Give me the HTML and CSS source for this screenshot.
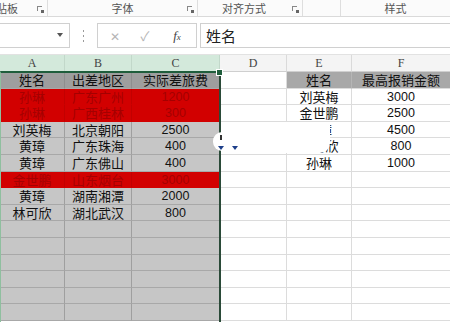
FILE: index.html
```html
<!DOCTYPE html>
<html>
<head>
<meta charset="utf-8">
<link rel="stylesheet" href="styles.css">
</head>
<body>
<div class="app">
  <div class="ribbon">
    <div class="grp g1"><span class="glabel cut">贴板</span><span class="launch"></span></div>
    <div class="grp g2"><span class="glabel">字体</span><span class="launch"></span></div>
    <div class="grp g3"><span class="glabel">对齐方式</span><span class="launch"></span></div>
    <div class="grp g4"></div>
    <div class="grp g5"><span class="glabel">样式</span></div>
  </div>
  <div class="fbar">
    <div class="namebox"><span class="arrow"></span></div>
    <div class="dots"><i></i><i></i><i></i></div>
    <div class="fxbox">
      <span class="ic x">✕</span>
      <span class="ic ok">✓</span>
      <span class="ic fx">f<sub>x</sub></span>
    </div>
    <div class="finput">姓名</div>
  </div>
  <div class="sheet">
    <div class="row hdr">
      <div class="c ca sel">A</div><div class="c cb sel">B</div><div class="c cc sel">C</div>
      <div class="c cd">D</div><div class="c ce">E</div><div class="c cf">F</div>
    </div>
    <div class="row">
      <div class="c ca s th">姓名</div><div class="c cb s th">出差地区</div><div class="c cc s th">实际差旅费</div>
      <div class="c cd"></div><div class="c ce th2">姓名</div><div class="c cf th2">最高报销金额</div>
    </div>
    <div class="row">
      <div class="c ca r">孙琳</div><div class="c cb r">广东广州</div><div class="c cc r n">1200</div>
      <div class="c cd"></div><div class="c ce">刘英梅</div><div class="c cf n">3000</div>
    </div>
    <div class="row">
      <div class="c ca r">孙琳</div><div class="c cb r">广西桂林</div><div class="c cc r n">300</div>
      <div class="c cd"></div><div class="c ce">金世鹏</div><div class="c cf n">2500</div>
    </div>
    <div class="row">
      <div class="c ca s">刘英梅</div><div class="c cb s">北京朝阳</div><div class="c cc s n">2500</div>
      <div class="c cd"></div><div class="c ce">黄璋</div><div class="c cf n">4500</div>
    </div>
    <div class="row">
      <div class="c ca s">黄璋</div><div class="c cb s">广东珠海</div><div class="c cc s n">400</div>
      <div class="c cd"></div><div class="c ce">林可欣</div><div class="c cf n">800</div>
    </div>
    <div class="row">
      <div class="c ca s">黄璋</div><div class="c cb s">广东佛山</div><div class="c cc s n">400</div>
      <div class="c cd"></div><div class="c ce">孙琳</div><div class="c cf n">1000</div>
    </div>
    <div class="row">
      <div class="c ca r">金世鹏</div><div class="c cb r">山东烟台</div><div class="c cc r n">3000</div>
      <div class="c cd"></div><div class="c ce"></div><div class="c cf"></div>
    </div>
    <div class="row">
      <div class="c ca s">黄璋</div><div class="c cb s">湖南湘潭</div><div class="c cc s n">2000</div>
      <div class="c cd"></div><div class="c ce"></div><div class="c cf"></div>
    </div>
    <div class="row">
      <div class="c ca s">林可欣</div><div class="c cb s">湖北武汉</div><div class="c cc s n">800</div>
      <div class="c cd"></div><div class="c ce"></div><div class="c cf"></div>
    </div>
    <div class="row"><div class="c ca s"></div><div class="c cb s"></div><div class="c cc s"></div><div class="c cd"></div><div class="c ce"></div><div class="c cf"></div></div>
    <div class="row"><div class="c ca s"></div><div class="c cb s"></div><div class="c cc s"></div><div class="c cd"></div><div class="c ce"></div><div class="c cf"></div></div>
    <div class="row"><div class="c ca s"></div><div class="c cb s"></div><div class="c cc s"></div><div class="c cd"></div><div class="c ce"></div><div class="c cf"></div></div>
    <div class="row"><div class="c ca s"></div><div class="c cb s"></div><div class="c cc s"></div><div class="c cd"></div><div class="c ce"></div><div class="c cf"></div></div>
    <div class="row"><div class="c ca s"></div><div class="c cb s"></div><div class="c cc s"></div><div class="c cd"></div><div class="c ce"></div><div class="c cf"></div></div>
    <div class="row"><div class="c ca s"></div><div class="c cb s"></div><div class="c cc s"></div><div class="c cd"></div><div class="c ce"></div><div class="c cf"></div></div>
    <div class="selbox"><span class="handle"></span></div>
    <div class="smear"></div>
    <div class="tag"><span class="mk"></span><span class="tri"></span><span class="tri t2"></span></div>
  </div>
</div>
</body>
</html>
```
FILE: styles.css
```css
html, body {
  margin: 0;
  padding: 0;
  background: #ffffff;
}
.app {
  width: 450px;
  height: 322px;
  overflow: hidden;
  font-family: "Noto Sans CJK SC", "Liberation Sans", sans-serif;
}
.ribbon {
  height: 16px;
  display: flex;
  border-bottom: 1px solid #dadada;
  background: #fbfbfb;
}
.grp {
  position: relative;
  border-right: 1px solid #dedede;
  display: flex;
  align-items: center;
  justify-content: center;
  font-size: 11px;
  color: #555;
}
.g1 { width: 47px; justify-content: flex-start; }
.g2 { width: 149px; }
.g3 { width: 104px; }
.g4 { width: 37px; }
.g5 { flex: 1; border-right: none; }
.glabel { line-height: 16px; }
.g3 .glabel { margin-right: 12px; }
.cut { margin-left: -4px; }
.launch {
  position: absolute;
  right: 5px;
  top: 6px;
  width: 5px;
  height: 5px;
  border-left: 1px solid #888;
  border-top: 1px solid #888;
  box-sizing: border-box;
}
.launch::after {
  content: "";
  position: absolute;
  right: -2px;
  bottom: -2px;
  width: 3px;
  height: 3px;
  background: #666;
}
.fbar {
  height: 38px;
  display: flex;
  align-items: center;
  box-sizing: border-box;
  border-bottom: 1px solid #e2e2e2;
  background: #ffffff;
}
.namebox {
  position: relative;
  width: 70px;
  height: 25px;
  box-sizing: border-box;
  border: 1px solid #d0d0d0;
  border-left: none;
  background: #fff;
}
.arrow {
  position: absolute;
  right: 6px;
  top: 9px;
  border-left: 3px solid transparent;
  border-right: 3px solid transparent;
  border-top: 4px solid #555;
}
.dots {
  width: 27px;
  display: flex;
  flex-direction: column;
  align-items: center;
  gap: 3px;
}
.dots i {
  width: 1px;
  height: 2px;
  background: #9a9a9a;
}
.fxbox {
  width: 100px;
  height: 25px;
  box-sizing: border-box;
  border: 1px solid #d0d0d0;
  display: flex;
  align-items: center;
  background: #fff;
}
.ic { display: block; text-align: center; }
.x { width: 34px; color: #b5b5b5; font-size: 12px; }
.ok { width: 26px; color: #b5b5b5; font-size: 13px; }
.fx {
  width: 38px;
  font-family: "Liberation Serif", serif;
  font-style: italic;
  font-size: 13px;
  color: #444;
}
.fx sub { font-size: 9px; vertical-align: baseline; }
.finput {
  flex: 1;
  margin-left: 3px;
  height: 25px;
  box-sizing: border-box;
  border: 1px solid #d0d0d0;
  border-right: none;
  font-size: 15px;
  line-height: 23px;
  padding-left: 5px;
  color: #222;
}
.sheet {
  position: relative;
}
.row {
  display: flex;
  height: 16.6px;
}
.row.hdr { height: 17px; }
.c {
  box-sizing: border-box;
  border-right: 1px solid #dcdcdc;
  border-bottom: 1px solid #dcdcdc;
  text-align: center;
  font-size: 13px;
  line-height: 16px;
  color: #111;
  white-space: nowrap;
}
.ca { width: 65px; }
.cb { width: 67px; }
.cc { width: 88px; }
.cd { width: 67px; }
.ce { width: 65px; }
.cf { width: 98px; border-right: none; }
.hdr .c {
  font-family: "Liberation Serif", serif;
  font-size: 12px;
  line-height: 16px;
  color: #444;
  background: #f4f4f4;
  border-right-color: #dadada;
  border-bottom-color: #cfcfcf;
}
.hdr .sel {
  background: #d3e9db;
  border-right-color: #c2d8ca;
  border-bottom: 1px solid #1f5e3c;
}
.s {
  background: #c6c6c6;
  border-right-color: #9f9f9f;
  border-bottom-color: #a8a8a8;
}
.th {
  background: #9e9e9e;
  border-right-color: #8e8e8e;
}
.th2 {
  background: #a8a8a8;
  border-right-color: #b6b6b6;
}
.r {
  background: #d20000;
  color: #a40000;
  border-right-color: #c20000;
  border-bottom-color: #d20000;
}
.n {
  font-family: "Liberation Sans", sans-serif;
  font-size: 12.5px;
}
.selbox {
  position: absolute;
  left: 0;
  top: 16px;
  width: 221px;
  bottom: -10px;
  box-sizing: border-box;
  border-left: 1px solid #8fbf9f;
  border-top: 2px solid #1f5e3c;
  border-right: 2px solid #2a4a38;
  pointer-events: none;
}
.handle {
  position: absolute;
  right: -4px;
  top: -4px;
  width: 5px;
  height: 5px;
  background: #1f5e3c;
  border: 1px solid #fff;
}
.smear {
  position: absolute;
  left: 222px;
  top: 67px;
  width: 108px;
  height: 31px;
  background: #fff;
  border-radius: 6px 2px 10px 4px;
}
.tag {
  position: absolute;
  left: 213px;
  top: 77px;
  width: 22px;
  height: 19px;
  background: #fff;
  border-radius: 9px 0 0 9px;
}
.mk {
  position: absolute;
  left: 7px;
  top: 3px;
  width: 2px;
  height: 5px;
  background: #333;
}
.tri {
  position: absolute;
  left: 5px;
  top: 14px;
  border-left: 3px solid transparent;
  border-right: 3px solid transparent;
  border-top: 4px solid #1d3f8a;
}
.tri.t2 { left: 19px; }
```
